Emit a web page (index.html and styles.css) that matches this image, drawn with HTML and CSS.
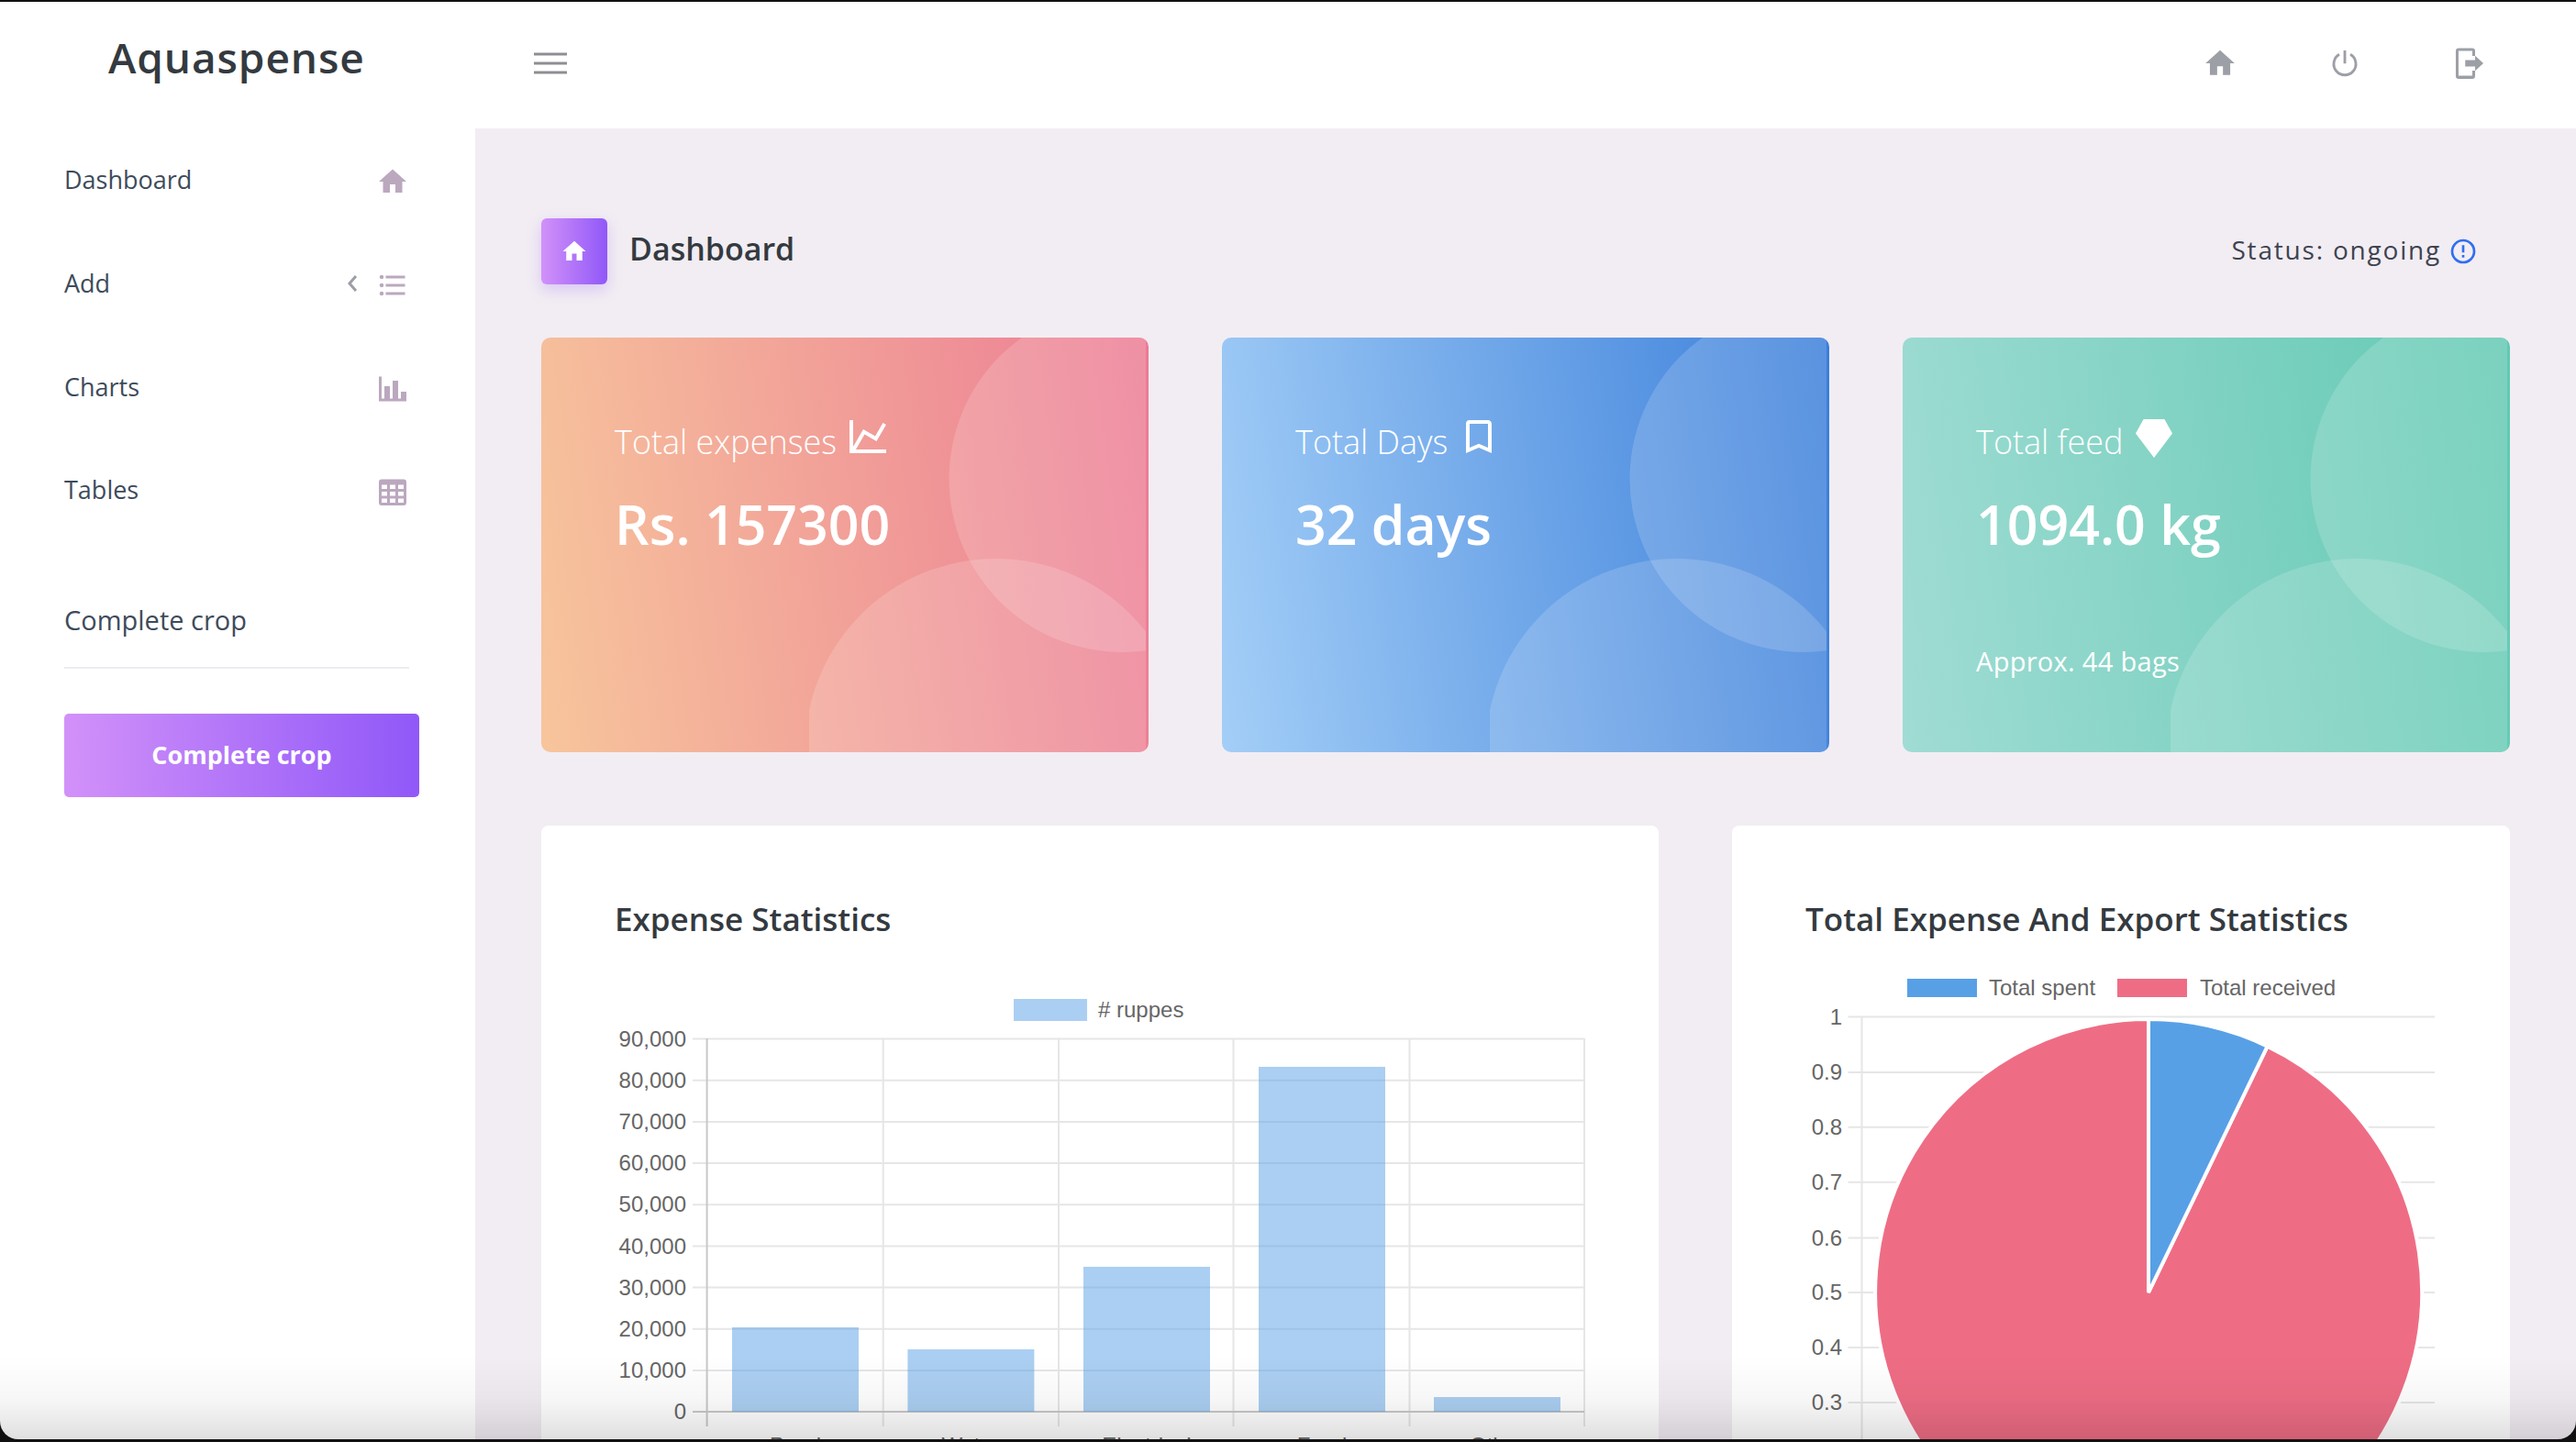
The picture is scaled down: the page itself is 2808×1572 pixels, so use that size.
FILE: index.html
```html
<!DOCTYPE html>
<html lang="en">
<head>
    <meta charset="UTF-8">
    <meta name="viewport" content="width=device-width, initial-scale=1.0">
    <title>Aquaspense</title>
    <link rel="stylesheet" href="styles.css">
</head>
<body>
    <header class="topbar">
        <div class="brand">Aquaspense</div>
        <button class="menu-toggle" aria-label="Toggle menu">
            <svg viewBox="0 0 36 24" class="menu-icon"><path d="M0 2H36M0 12H36M0 22H36"/></svg>
        </button>
        <div class="top-actions">
            <span class="top-action"><svg viewBox="0 0 24 24" class="icon-top"><path d="M10 20v-6h4v6h5v-8h3L12 3 2 12h3v8z"/></svg></span>
            <span class="top-action"><svg viewBox="0 0 24 24" class="icon-top-line"><path d="M8.200 5.900a7.600 7.600 0 1 0 7.600 0M12 3.200v9"/></svg></span>
            <span class="top-action"><svg viewBox="0 0 24 24" class="icon-top"><path d="M4.500 1.600h9.300a2 2 0 0 1 2 2V7h-1.900V3.500H4.400v17h9.500V17h1.900v3.700a2 2 0 0 1-2 2H4.500a2 2 0 0 1-2-2V3.600a2 2 0 0 1 2-2z"/><path d="M9 9.800h6.800V6.800L21.500 12l-5.700 5.200v-3H9z"/></svg></span>
        </div>
    </header>

    <div class="layout">
        <aside class="sidebar">
            <nav>
                <a class="nav-item">
                    <span class="nav-label">Dashboard</span>
                    <svg viewBox="0 0 24 24" class="nav-icon"><path d="M10 20v-6h4v6h5v-8h3L12 3 2 12h3v8z"/></svg>
                </a>
                <a class="nav-item">
                    <span class="nav-label">Add</span>
                    <svg viewBox="0 0 12 20" class="nav-arrow"><path d="M10 2L3 10l7 8"/></svg>
                    <svg viewBox="0 0 24 24" class="nav-icon"><path d="M7,5H21V7H7V5M7,13V11H21V13H7M4,4.500A1.500,1.500 0 0,1 5.500,6A1.500,1.500 0 0,1 4,7.500A1.500,1.500 0 0,1 2.500,6A1.500,1.500 0 0,1 4,4.500M4,10.500A1.500,1.500 0 0,1 5.500,12A1.500,1.500 0 0,1 4,13.500A1.500,1.500 0 0,1 2.500,12A1.500,1.500 0 0,1 4,10.500M7,19V17H21V19H7M4,16.500A1.500,1.500 0 0,1 5.500,18A1.500,1.500 0 0,1 4,19.500A1.500,1.500 0 0,1 2.500,18A1.500,1.500 0 0,1 4,16.500Z"/></svg>
                </a>
                <a class="nav-item">
                    <span class="nav-label">Charts</span>
                    <svg viewBox="0 0 24 24" class="nav-icon"><path d="M22,21H2V3H4V19H6V10H10V19H12V6H16V19H18V14H22V21Z"/></svg>
                </a>
                <a class="nav-item">
                    <span class="nav-label">Tables</span>
                    <svg viewBox="0 0 24 24" class="nav-icon"><path d="M4,3H20A2,2 0 0,1 22,5V20A2,2 0 0,1 20,22H4A2,2 0 0,1 2,20V5A2,2 0 0,1 4,3M4,7V10H8V7H4M10,7V10H14V7H10M20,10V7H16V10H20M4,12V15H8V12H4M4,20H8V17H4V20M10,12V15H14V12H10M10,20H14V17H10V20M20,20V17H16V20H20M20,12H16V15H20V12Z"/></svg>
                </a>
            </nav>
            <div class="crop-box">
                <div class="crop-title">Complete crop</div>
                <button class="crop-btn">Complete crop</button>
            </div>
        </aside>

        <main class="content">
            <div class="page-header">
                <h3 class="page-title">
                    <span class="page-icon"><svg viewBox="0 0 24 24"><path d="M10 20v-6h4v6h5v-8h3L12 3 2 12h3v8z"/></svg></span>
                    <span class="page-name">Dashboard</span>
                </h3>
                <div class="status">
                    <span class="status-text">Status: ongoing</span>
                    <svg viewBox="0 0 24 24"><path d="M11,15H13V17H11V15M11,7H13V13H11V7M12,2C6.470,2 2,6.480 2,12A10,10 0 0,0 12,22A10,10 0 0,0 22,12A10,10 0 0,0 12,2M12,20A8,8 0 0,1 4,12A8,8 0 0,1 12,4A8,8 0 0,1 20,12A8,8 0 0,1 12,20Z"/></svg>
                </div>
            </div>

            <section class="stat-row">
                <div class="stat-card stat-danger">
                    <svg class="stat-circles" viewBox="0 0 367 452"><circle cx="341.500" cy="154" r="189"/><circle cx="203.500" cy="449" r="208"/></svg>
                    <div class="stat-label">Total expenses <svg viewBox="0 0 24 24"><path d="M16,11.780L20.240,4.450L21.970,5.450L16.740,14.500L10.230,10.750L5.460,19H22V21H2V3H4V17.540L9.500,8L16,11.780Z"/></svg></div>
                    <div class="stat-value">Rs. 157300</div>
                </div>
                <div class="stat-card stat-info">
                    <svg class="stat-circles" viewBox="0 0 367 452"><circle cx="341.500" cy="154" r="189"/><circle cx="203.500" cy="449" r="208"/></svg>
                    <div class="stat-label">Total Days <svg viewBox="0 0 24 24"><path d="M17,18L12,15.820L7,18V5H17M17,3H7A2,2 0 0,0 5,5V21L12,18L19,21V5C19,3.890 18.100,3 17,3Z"/></svg></div>
                    <div class="stat-value">32 days</div>
                </div>
                <div class="stat-card stat-success">
                    <svg class="stat-circles" viewBox="0 0 367 452"><circle cx="341.500" cy="154" r="189"/><circle cx="203.500" cy="449" r="208"/></svg>
                    <div class="stat-label">Total feed <svg viewBox="0 0 24 24"><path d="M6.300 2.500H17.700L22 10.300 12 23.500 2 10.300Z"/></svg></div>
                    <div class="stat-value">1094.0 kg</div>
                    <div class="stat-note">Approx. 44 bags</div>
                </div>
            </section>

            <section class="chart-row">
                <div class="chart-card">
                    <h4 class="chart-title">Expense Statistics</h4>
                    <svg class="chart" viewBox="0 0 1057 560" width="1057" height="560">
                        <rect class="swatch-bar" x="435" y="29" width="80" height="24"/>
                        <text class="chart-text" x="527" y="49"># ruppes</text>
                        <g class="grid">
                            <path d="M85 72.600H1057M85 117.800H1057M85 162.900H1057M85 208.100H1057M85 253.200H1057M85 298.400H1057M85 343.600H1057M85 388.700H1057M85 433.900H1057"/>
                            <path d="M292.700 72V495M484 72V495M674.500 72V495M866.500 72V495M1057 72V495"/>
                        </g>
                        <path class="axis" d="M100.600 72V495M85 479H1057"/>
                        <g class="bars">
                            <rect x="128" y="387" width="138" height="92"/>
                            <rect x="319.400" y="411" width="138" height="68"/>
                            <rect x="511" y="321" width="138" height="158"/>
                            <rect x="702" y="103" width="138" height="376"/>
                            <rect x="893" y="463" width="138" height="16"/>
                        </g>
                        <g class="chart-text tick-left">
                            <text x="78" y="81">90,000</text>
                            <text x="78" y="126">80,000</text>
                            <text x="78" y="171">70,000</text>
                            <text x="78" y="216">60,000</text>
                            <text x="78" y="261">50,000</text>
                            <text x="78" y="307">40,000</text>
                            <text x="78" y="352">30,000</text>
                            <text x="78" y="397">20,000</text>
                            <text x="78" y="442">10,000</text>
                            <text x="78" y="487">0</text>
                        </g>
                        <g class="chart-text tick-bottom">
                            <text x="197" y="524">Pond</text>
                            <text x="388" y="524">Water</text>
                            <text x="580" y="524">Electrical</text>
                            <text x="771" y="524">Feed</text>
                            <text x="962" y="524">Other</text>
                        </g>
                    </svg>
                </div>

                <div class="chart-card">
                    <h4 class="chart-title">Total Expense And Export Statistics</h4>
                    <svg class="chart" viewBox="0 0 688 560" width="688" height="560">
                        <rect class="swatch-blue" x="111" y="7" width="76" height="20"/>
                        <text class="chart-text" x="200" y="25">Total spent</text>
                        <rect class="swatch-pink" x="340" y="7" width="76" height="20"/>
                        <text class="chart-text" x="430" y="25">Total received</text>
                        <g class="grid">
                            <path d="M46.500 48.500H686M46.500 109H686M46.500 168.700H686M46.500 228.700H686M46.500 289.500H686M46.500 349H686M46.500 409H686M46.500 469H686M46.500 529H686"/>
                            <path d="M61.500 48V560"/>
                        </g>
                        <path class="pie-pink" d="M374 349L503.600 80.600A298 298 0 1 1 374 51Z"/>
                        <path class="pie-blue" d="M374 349V51A298 298 0 0 1 503.600 80.600Z"/>
                        <g class="chart-text tick-left">
                            <text x="40" y="57">1</text>
                            <text x="40" y="117">0.9</text>
                            <text x="40" y="177">0.8</text>
                            <text x="40" y="237">0.7</text>
                            <text x="40" y="298">0.6</text>
                            <text x="40" y="357">0.5</text>
                            <text x="40" y="417">0.4</text>
                            <text x="40" y="477">0.3</text>
                            <text x="40" y="537">0.2</text>
                        </g>
                    </svg>
                </div>
            </section>
        </main>
    </div>

    <div class="window-frame"></div>
</body>
</html>
```

FILE: styles.css
```css
* {
    margin: 0;
    padding: 0;
    box-sizing: border-box;
}

html, body {
    height: 100%;
    overflow: hidden;
}

body {
    font-family: 'Open Sans', sans-serif;
    background: #f2edf3;
    color: #343a40;
    display: flex;
    flex-direction: column;
}

.topbar {
    height: 140px;
    flex: none;
    padding-bottom: 3px;
    background: #fff;
    display: flex;
    align-items: center;
}

.brand {
    width: 518px;
    padding: 0 0 13px 118px;
    font-size: 46px;
    font-weight: 600;
    letter-spacing: 0.9px;
    color: #343a40;
}

.menu-toggle {
    margin-left: 64px;
    border: none;
    background: none;
    display: flex;
}

.menu-icon {
    width: 36px;
    height: 24px;
    fill: none;
    stroke: #8e8e93;
    stroke-width: 3;
}

.top-actions {
    margin-left: auto;
    padding-right: 48px;
    display: flex;
}

.top-action {
    width: 136px;
    display: flex;
    justify-content: center;
}

.icon-top {
    width: 38px;
    height: 38px;
    fill: #9c9fa6;
}

.icon-top-line {
    width: 38px;
    height: 38px;
    fill: none;
    stroke: #9c9fa6;
    stroke-width: 1.800;
}

.layout {
    flex: 1;
    display: flex;
    min-height: 0;
}

.sidebar {
    width: 518px;
    flex: none;
    background: #fff;
    padding-left: 70px;
}

.nav-item {
    width: 376px;
    height: 112.700px;
    display: flex;
    align-items: center;
    font-size: 27px;
    color: #3e4b5b;
}

.nav-label {
    margin-right: auto;
    padding-bottom: 1px;
}

.nav-icon {
    width: 36px;
    height: 36px;
    margin-top: 4px;
    fill: #bba8bf;
}

.nav-arrow {
    width: 12px;
    height: 20px;
    margin-right: 20px;
    fill: none;
    stroke: #9c9fa6;
    stroke-width: 3;
}

.crop-box {
    padding-top: 60px;
}

.crop-title {
    width: 376px;
    font-size: 29px;
    line-height: 50px;
    padding-bottom: 26px;
    border-bottom: 2px solid #ebedf2;
    color: #3e4b5b;
}

.crop-btn {
    margin-top: 49px;
    width: 387px;
    height: 91px;
    padding-bottom: 2px;
    border: none;
    border-radius: 5px;
    background: linear-gradient(to right, #d291f9, #9058f8);
    color: #fff;
    font-family: inherit;
    font-size: 27px;
    font-weight: 700;
}

.content {
    flex: 1;
    min-width: 0;
    padding: 98px 72px 0 72px;
    overflow: hidden;
}

.page-header {
    display: flex;
    align-items: center;
    justify-content: space-between;
    height: 72px;
    margin-bottom: 58px;
}

.page-title {
    display: flex;
    align-items: center;
    gap: 24px;
    font-size: 34px;
    font-weight: 600;
    line-height: 72px;
    color: #343a40;
}

.page-name {
    padding-bottom: 6px;
}

.page-icon {
    width: 72px;
    height: 72px;
    border-radius: 6px;
    background: linear-gradient(to right, #d291f9, #9058f8);
    box-shadow: 0 6px 16px rgba(144, 88, 248, 0.25);
    display: flex;
    align-items: center;
    justify-content: center;
}

.page-icon svg {
    width: 30px;
    height: 30px;
    fill: #fff;
}

.status {
    display: flex;
    align-items: center;
    gap: 8px;
    padding-right: 35px;
    font-size: 28px;
    letter-spacing: 1.800px;
    color: #3e4350;
}

.status-text {
    padding-bottom: 5px;
}

.status svg {
    width: 32px;
    height: 32px;
    fill: #2f6ff0;
}

.stat-row {
    display: grid;
    grid-template-columns: repeat(3, 1fr);
    gap: 80px;
    margin-bottom: 80px;
}

.stat-card {
    position: relative;
    height: 452px;
    padding: 92px 80px 0;
    border-radius: 10px;
    color: #fff;
    overflow: hidden;
}

.stat-danger {
    background: linear-gradient(82deg, #f7c59c, #ec7b94);
}

.stat-info {
    background: linear-gradient(82deg, #a3cef7, #3a7eda);
}

.stat-success {
    background: linear-gradient(82deg, #a0dcd4, #62c9b2);
}

.stat-circles {
    position: absolute;
    top: 0;
    right: 3px;
    width: 367px;
    height: 452px;
    fill: rgba(255, 255, 255, 0.16);
}

.stat-label {
    position: relative;
    display: flex;
    align-items: flex-end;
    gap: 10px;
    height: 44px;
    font-size: 36px;
    font-weight: 300;
    line-height: 44px;
}

.stat-label svg {
    width: 48px;
    height: 48px;
    fill: #fff;
    margin-bottom: 4px;
}

.stat-value {
    position: relative;
    margin-top: 32px;
    font-size: 59px;
    font-weight: 600;
    line-height: 70px;
}

.stat-note {
    position: relative;
    margin-top: 97px;
    font-size: 29px;
    letter-spacing: 0.3px;
    line-height: 36px;
}

.chart-row {
    display: grid;
    grid-template-columns: 1218fr 847fr;
    gap: 80px;
}

.chart-card {
    height: 800px;
    padding: 80px 80px 0;
    background: #fff;
    border-radius: 8px;
}

.chart-title {
    height: 44px;
    margin-bottom: 36px;
    font-size: 35px;
    font-weight: 600;
    line-height: 44px;
    color: #343a40;
}

.chart {
    display: block;
    overflow: visible;
}

.chart-text {
    font-family: 'Liberation Sans', sans-serif;
    font-size: 24px;
    fill: #666;
}

.tick-left text {
    text-anchor: end;
}

.tick-bottom text {
    text-anchor: middle;
}

.grid path {
    fill: none;
    stroke: #e6e6e6;
    stroke-width: 2;
}

.axis {
    fill: none;
    stroke: #c8c8c8;
    stroke-width: 2;
}

.bars rect,
.swatch-bar {
    fill: rgba(88, 160, 230, 0.5);
}

.swatch-blue,
.pie-blue {
    fill: #58a0e6;
}

.swatch-pink,
.pie-pink {
    fill: #ee6d85;
}

.pie-blue,
.pie-pink {
    stroke: #fff;
    stroke-width: 4;
}

.window-frame {
    position: fixed;
    inset: 2px 0 3px 0;
    border-radius: 0 0 20px 20px;
    box-shadow: 0 0 0 40px #111;
    background: linear-gradient(to bottom, transparent calc(100% - 90px), rgba(0, 0, 0, 0.03) calc(100% - 45px), rgba(0, 0, 0, 0.12));
    pointer-events: none;
}
```
